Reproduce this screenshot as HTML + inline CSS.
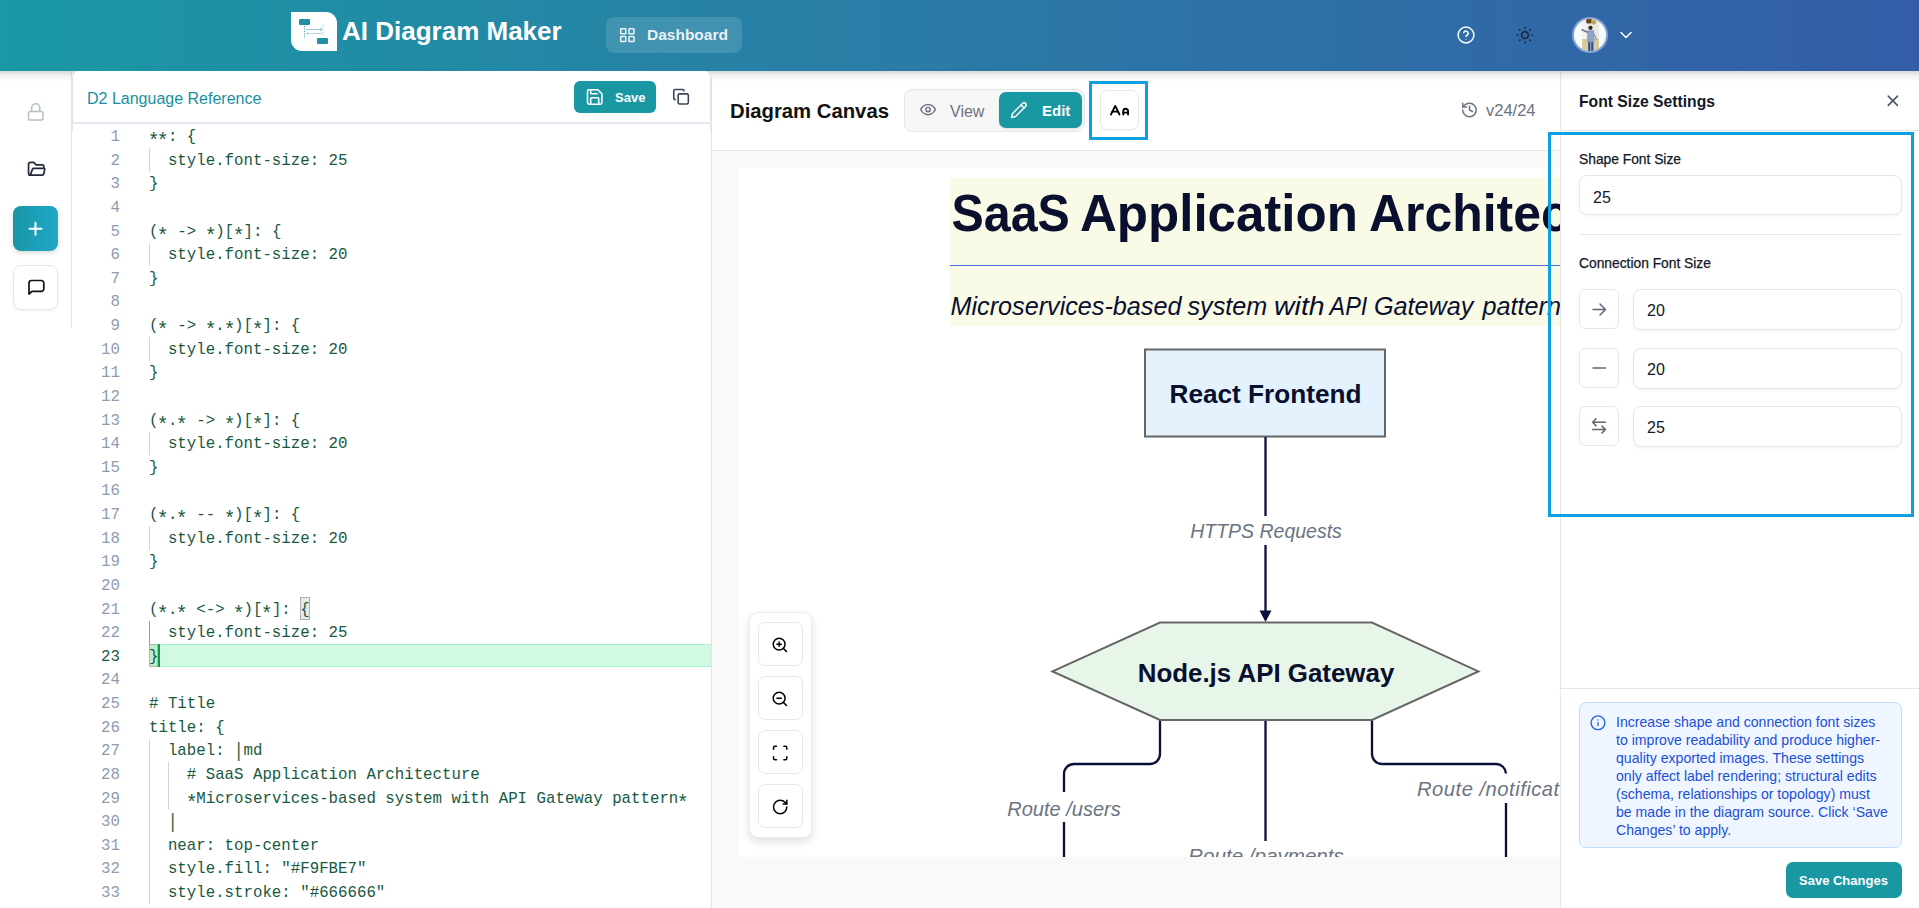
<!DOCTYPE html>
<html><head><meta charset="utf-8">
<style>
*{box-sizing:border-box;margin:0;padding:0}
html,body{width:1919px;height:908px;overflow:hidden;background:#fff;font-family:"Liberation Sans",sans-serif}
.a{position:absolute}
.t{position:absolute;white-space:nowrap;line-height:1}
#hdr{left:0;top:0;width:1919px;height:71px;background:linear-gradient(90deg,#1a98a4 0%,#2b7aa6 50%,#335da7 100%);z-index:5}

.ln{position:absolute;left:72px;width:48px;text-align:right;font-family:"Liberation Mono",monospace;font-size:15.75px;line-height:23.625px;color:#8e9bb3;white-space:pre}
.ln.act{color:#1d5c45}
.cl{position:absolute;left:149px;font-family:"Liberation Mono",monospace;font-size:15.75px;line-height:23.625px;color:#17593f;white-space:pre}
.as{display:inline-block;transform:translateY(5.5px) scale(1.25)}
.br{display:inline-block;transform:translateY(1px) scaleY(1.3)}
.ig{position:absolute;width:1px;background:#d4d4d4}
.ib{width:40px;height:40px;border-radius:6px;background:#fff;border:1px solid #e5e7eb}
.inp{width:269px;height:41px;border-radius:8px;background:#fff;border:1px solid #e5e7eb;box-shadow:0 1px 3px rgba(0,0,0,.06)}
</style></head><body>
<!-- HEADER -->
<div id="hdr" class="a">
  <svg class="a" style="left:291px;top:12px" width="46" height="39" viewBox="0 0 46 39">
    <path d="M0 0H35A11 11 0 0 1 46 11V39H11A11 11 0 0 1 0 28Z" fill="#fff"/>
    <rect x="8" y="7" width="11" height="6" rx="1" fill="#1f91a3"/>
    <rect x="26" y="26" width="11" height="6" rx="1" fill="#1f91a3"/>
    <path d="M13.5 14V26.5" stroke="#5aaab8" stroke-width="1" stroke-dasharray="1.2 1.2"/>
    <path d="M32 12.5V24.5" stroke="#9ccbd4" stroke-width="1" stroke-dasharray="1.2 1.2"/>
    <path d="M15 17.5H31M29 15.8L31 17.5L29 19.2" stroke="#7fbcc8" stroke-width=".8" fill="none"/>
    <path d="M15.5 21.5H31M17.5 19.8L15.5 21.5L17.5 23.2" stroke="#9ccbd4" stroke-width=".8" fill="none"/>
  </svg>
  <div class="t" style="left:342px;top:18px;font-size:26px;font-weight:bold;color:#fff">AI Diagram Maker</div>
  <div class="a" style="left:606px;top:17px;width:136px;height:36px;border-radius:8px;background:rgba(255,255,255,.13)"></div>
  <svg class="a" style="left:619px;top:27px" width="17" height="16" viewBox="0 0 17 16" fill="none" stroke="rgba(255,255,255,.9)" stroke-width="1.5">
    <rect x="1.75" y="1.75" width="5" height="5" rx=".5"/><rect x="10" y="1.75" width="5" height="5" rx=".5"/>
    <rect x="1.75" y="9.5" width="5" height="5" rx=".5"/><rect x="10" y="9.5" width="5" height="5" rx=".5"/>
  </svg>
  <div class="t" style="left:647px;top:27px;font-size:15.5px;font-weight:bold;color:rgba(255,255,255,.9)">Dashboard</div>
  <svg class="a" style="left:1456px;top:25px" width="20" height="20" viewBox="0 0 20 20" fill="none" stroke="#fff" stroke-width="1.5" stroke-linecap="round">
    <circle cx="10" cy="10" r="7.9"/>
    <path d="M7.7 7.6A2.4 2.4 0 0 1 12.3 8.3C12.3 9.8 10 10.3 10 11.6"/>
    <circle cx="10" cy="14.3" r=".5" fill="#fff" stroke="none"/>
  </svg>
  <svg class="a" style="left:1515px;top:25px" width="20" height="20" viewBox="0 0 20 20" fill="none" stroke="#1e293b" stroke-width="1.7" stroke-linecap="round">
    <circle cx="10" cy="10" r="3.4"/>
    <path d="M10 2.3V2.9M10 17.1V17.7M2.3 10H2.9M17.1 10H17.7M4.6 4.6L5 5M15 15L15.4 15.4M4.6 15.4L5 15M15 5L15.4 4.6"/>
  </svg>
  <svg class="a" style="left:1572px;top:17px" width="36" height="36" viewBox="0 0 36 36">
    <defs><clipPath id="av"><circle cx="18" cy="18" r="16"/></clipPath></defs>
    <circle cx="18" cy="18" r="18" fill="#86a3d2"/>
    <circle cx="18" cy="18" r="16" fill="#f6fbfd"/>
    <g clip-path="url(#av)">
      <rect x="10" y="1.5" width="17" height="33" fill="#e9e8e2"/>
      <rect x="10" y="22" width="17" height="13" fill="#d8cc9f"/>
      <rect x="10.5" y="2" width="4" height="20" fill="#f3f3f0"/>
      <ellipse cx="17" cy="4" rx="3" ry="2.6" fill="#6a4424"/>
      <ellipse cx="21.5" cy="5" rx="2.5" ry="2.5" fill="#b5ad60"/>
      <circle cx="18.5" cy="10.8" r="2.1" fill="#2a2520"/>
      <path d="M15.3 13.2H22L22.6 25H15Z" fill="#8fa3c6"/>
      <path d="M16 15.5L9.5 12.5" stroke="#707a8e" stroke-width="1.6"/>
      <path d="M22 17L24.5 23" stroke="#8a8f9a" stroke-width="1.2"/>
      <path d="M17.3 25V34M20.3 25V34" stroke="#2350a6" stroke-width="2.2"/>
    </g>
  </svg>
  <svg class="a" style="left:1619px;top:30px" width="14" height="10" viewBox="0 0 14 10" fill="none" stroke="#fff" stroke-width="1.5" stroke-linecap="round" stroke-linejoin="round">
    <path d="M2 2.5L7 7.5L12 2.5"/>
  </svg>
</div>

<!-- SIDEBAR -->
<div class="a" style="left:0;top:70px;width:72px;height:258px;border-right:1px solid #e5e7eb;background:#fff"></div>
<div class="a" style="left:0;top:71px;width:72px;height:11px;background:linear-gradient(rgba(0,0,0,.15),rgba(0,0,0,.06) 40%,rgba(0,0,0,0))"></div>
<div class="a" style="left:13px;top:206px;width:45px;height:45px;border-radius:8px;background:linear-gradient(90deg,#1996a4,#20a8c9);box-shadow:0 2px 5px rgba(0,0,0,.15)"></div>
<div class="a" style="left:13px;top:265px;width:45px;height:45px;border-radius:8px;border:1px solid #e5e7eb;background:#fff;box-shadow:0 1px 3px rgba(0,0,0,.05)"></div>

<!-- EDITOR -->
<div class="a" style="left:72px;top:71px;width:10px;height:11px;background:linear-gradient(rgba(0,0,0,.15),rgba(0,0,0,.06) 40%,rgba(0,0,0,0))"></div>
<div class="a" style="left:700px;top:71px;width:12px;height:11px;background:linear-gradient(rgba(0,0,0,.15),rgba(0,0,0,.06) 40%,rgba(0,0,0,0))"></div>
<div class="a" style="left:72px;top:71px;width:639px;height:837px;background:#fff;border-radius:7px 7px 0 0"></div>
<div class="a" style="left:72px;top:71px;width:639px;height:60px;border:1px solid #dde3ee;border-top:none;border-bottom:none;border-radius:7px 7px 0 0"></div>
<div class="a" style="left:72px;top:122px;width:639px;height:2px;background:#e2e8f0"></div>
<div class="t" style="left:87px;top:90.5px;font-size:16px;color:#1a8fa0">D2 Language Reference</div>
<div class="a" style="left:574px;top:81px;width:82px;height:32px;border-radius:6px;background:#1997a3"></div>
<div class="t" style="left:615px;top:91px;font-size:13px;font-weight:bold;color:#fff">Save</div>


<!-- CODE -->
<div class="a" style="left:149px;top:644px;width:562px;height:23px;background:#d1f9e4;border-top:1px solid #a6f2cb;border-bottom:1px solid #a6f2cb"></div>
<div class="a" style="left:149px;top:644px;width:9px;height:23px;background:#bdeccf;border:1px solid #b5b5b5"></div>
<div class="a" style="left:300px;top:597px;width:10px;height:23px;background:#e6ebe6;border:1px solid #b0b0b0"></div>
<div class="ig" style="left:149px;top:148.125px;height:23.625px"></div>
<div class="ig" style="left:149px;top:242.625px;height:23.625px"></div>
<div class="ig" style="left:149px;top:337.125px;height:23.625px"></div>
<div class="ig" style="left:149px;top:431.625px;height:23.625px"></div>
<div class="ig" style="left:149px;top:526.125px;height:23.625px"></div>
<div class="ig" style="left:149px;top:620.625px;height:23.625px;background:#999"></div>
<div class="ig" style="left:149px;top:738.75px;height:165px"></div>
<div class="ig" style="left:168px;top:762.375px;height:47.25px"></div>
<div class="ln" style="top:126.000px">1</div>
<div class="cl" style="top:126.000px"><span class="as">*</span><span class="as">*</span>: {</div>
<div class="ln" style="top:149.625px">2</div>
<div class="cl" style="top:149.625px">  style.font-size: 25</div>
<div class="ln" style="top:173.250px">3</div>
<div class="cl" style="top:173.250px">}</div>
<div class="ln" style="top:196.875px">4</div>
<div class="ln" style="top:220.500px">5</div>
<div class="cl" style="top:220.500px">(<span class="as">*</span> -&gt; <span class="as">*</span>)[<span class="as">*</span>]: {</div>
<div class="ln" style="top:244.125px">6</div>
<div class="cl" style="top:244.125px">  style.font-size: 20</div>
<div class="ln" style="top:267.750px">7</div>
<div class="cl" style="top:267.750px">}</div>
<div class="ln" style="top:291.375px">8</div>
<div class="ln" style="top:315.000px">9</div>
<div class="cl" style="top:315.000px">(<span class="as">*</span> -&gt; <span class="as">*</span>.<span class="as">*</span>)[<span class="as">*</span>]: {</div>
<div class="ln" style="top:338.625px">10</div>
<div class="cl" style="top:338.625px">  style.font-size: 20</div>
<div class="ln" style="top:362.250px">11</div>
<div class="cl" style="top:362.250px">}</div>
<div class="ln" style="top:385.875px">12</div>
<div class="ln" style="top:409.500px">13</div>
<div class="cl" style="top:409.500px">(<span class="as">*</span>.<span class="as">*</span> -&gt; <span class="as">*</span>)[<span class="as">*</span>]: {</div>
<div class="ln" style="top:433.125px">14</div>
<div class="cl" style="top:433.125px">  style.font-size: 20</div>
<div class="ln" style="top:456.750px">15</div>
<div class="cl" style="top:456.750px">}</div>
<div class="ln" style="top:480.375px">16</div>
<div class="ln" style="top:504.000px">17</div>
<div class="cl" style="top:504.000px">(<span class="as">*</span>.<span class="as">*</span> -- <span class="as">*</span>)[<span class="as">*</span>]: {</div>
<div class="ln" style="top:527.625px">18</div>
<div class="cl" style="top:527.625px">  style.font-size: 20</div>
<div class="ln" style="top:551.250px">19</div>
<div class="cl" style="top:551.250px">}</div>
<div class="ln" style="top:574.875px">20</div>
<div class="ln" style="top:598.500px">21</div>
<div class="cl" style="top:598.500px">(<span class="as">*</span>.<span class="as">*</span> &lt;-&gt; <span class="as">*</span>)[<span class="as">*</span>]: {</div>
<div class="ln" style="top:622.125px">22</div>
<div class="cl" style="top:622.125px">  style.font-size: 25</div>
<div class="ln act" style="top:645.750px">23</div>
<div class="cl" style="top:645.750px">}</div>
<div class="ln" style="top:669.375px">24</div>
<div class="ln" style="top:693.000px">25</div>
<div class="cl" style="top:693.000px"># Title</div>
<div class="ln" style="top:716.625px">26</div>
<div class="cl" style="top:716.625px">title: {</div>
<div class="ln" style="top:740.250px">27</div>
<div class="cl" style="top:740.250px">  label: <span class="br">|</span>md</div>
<div class="ln" style="top:763.875px">28</div>
<div class="cl" style="top:763.875px">    # SaaS Application Architecture</div>
<div class="ln" style="top:787.500px">29</div>
<div class="cl" style="top:787.500px">    <span class="as">*</span>Microservices-based system with API Gateway pattern<span class="as">*</span></div>
<div class="ln" style="top:811.125px">30</div>
<div class="cl" style="top:811.125px">  <span class="br">|</span></div>
<div class="ln" style="top:834.750px">31</div>
<div class="cl" style="top:834.750px">  near: top-center</div>
<div class="ln" style="top:858.375px">32</div>
<div class="cl" style="top:858.375px">  style.fill: &quot;#F9FBE7&quot;</div>
<div class="ln" style="top:882.000px">33</div>
<div class="cl" style="top:882.000px">  style.stroke: &quot;#666666&quot;</div>

<div class="a" style="left:158px;top:644px;width:2px;height:23px;background:#0a9e3c"></div>

<!-- CANVAS -->
<div class="a" style="left:712px;top:71px;width:848px;height:80px;background:#fff;border-bottom:1px solid #e5e7eb"></div>
<div class="a" style="left:712px;top:151px;width:848px;height:757px;background:#f9f9f9"></div>
<div class="a" style="left:739px;top:168px;width:821px;height:689px;background:#fff"></div>
<div class="t" style="left:730px;top:101px;font-size:20.3px;font-weight:bold;color:#111">Diagram Canvas</div>
<div class="a" style="left:904px;top:89px;width:181px;height:43px;border-radius:8px;background:#f7f7f7;border:1px solid #e6e6e6"></div>
<div class="a" style="left:999px;top:92px;width:83px;height:36px;border-radius:7px;background:#1997a3;box-shadow:0 1px 2px rgba(0,0,0,.1)"></div>
<div class="t" style="left:950px;top:103.5px;font-size:16px;color:#6b7280">View</div>
<div class="t" style="left:1042px;top:103px;font-size:15px;font-weight:bold;color:#fff">Edit</div>
<div class="a" style="left:1100px;top:90px;width:39px;height:40px;border-radius:7px;background:#fff;border:1px solid #e5e7eb;box-shadow:0 1px 2px rgba(0,0,0,.04)"></div>
<div class="a" style="left:1089px;top:81px;width:59px;height:59px;border:3px solid #0ea0e2"></div>
<div class="t" style="left:1486px;top:101.5px;font-size:16.5px;color:#6b7280">v24/24</div>

<!-- DIAGRAM -->
<svg class="a" style="left:0;top:0" width="1919" height="908" viewBox="0 0 1919 908">
 <defs><clipPath id="dc"><rect x="739" y="168" width="821" height="689"/></clipPath></defs>
 <g clip-path="url(#dc)" font-family="Liberation Sans, sans-serif">
  <rect x="950" y="177.5" width="700" height="148.5" fill="#F9FBE7"/>
  <path d="M950 265.5H1650" stroke="#4a6fe3" stroke-width="1"/>
  <g font-weight="bold" font-size="52" fill="#0a0f2e">
   <text transform="translate(951.5 231) scale(.93 1)">SaaS</text><text transform="translate(1080 231) scale(.982 1)">Application</text><text transform="translate(1369 231) scale(.96 1)">Architecture</text>
  </g>
  <g font-style="italic" font-size="25.2" fill="#0a0f2e">
   <text x="950.5" y="315">Microservices-based</text><text x="1187.5" y="315">system</text><text transform="translate(1274 315) scale(1.13 1)">with</text><text transform="translate(1329.5 315) scale(.93 1)">API</text><text x="1374" y="315">Gateway</text><text x="1482.5" y="315">pattern</text>
  </g>
  <rect x="1145" y="349.5" width="240" height="87" fill="#e3f2fd" stroke="#666" stroke-width="2"/>
  <text x="1265.5" y="402.5" text-anchor="middle" font-weight="bold" font-size="26.2" fill="#0a0f2e">React Frontend</text>
  <g stroke="#0a0f3c" stroke-width="2.3" fill="none">
   <path d="M1265.5 437V516M1265.5 545V612"/>
   <path d="M1160 720V754A10 10 0 0 1 1150 764H1074A10 10 0 0 0 1064 774V792M1064 822V860"/>
   <path d="M1265.5 720V841"/>
   <path d="M1372 720V754A10 10 0 0 0 1382 764H1496A10 10 0 0 1 1506 773.5M1506 803V860"/>
  </g>
  <path d="M1259.5 610.5H1271.5L1265.5 622Z" fill="#0a0f3c"/>
  <path d="M1052.5 671.4L1160 622.5H1372L1478.4 671.4L1372 720H1160Z" fill="#e8f5e9" stroke="#666" stroke-width="2"/>
  <text x="1266" y="682" text-anchor="middle" font-weight="bold" font-size="25.9" fill="#0a0f2e">Node.js API Gateway</text>
  <g font-style="italic" font-size="19.5" fill="#6b7384">
   <text x="1266" y="538" text-anchor="middle">HTTPS Requests</text>
   <text x="1064" y="816.4" text-anchor="middle" font-size="20">Route /users</text>
   <text x="1266" y="863" text-anchor="middle" font-size="20.6">Route /payments</text>
   <text x="1417" y="795.5" font-size="20.2" letter-spacing=".5">Route /notifications</text>
  </g>
 </g>
</svg>


<!-- ZOOM CONTROLS -->
<div class="a" style="left:749px;top:612px;width:63px;height:226px;border-radius:9px;background:#fff;border:1px solid #ececec;box-shadow:0 4px 10px rgba(0,0,0,.13)"></div>
<div class="a" style="left:758px;top:622px;width:45px;height:44px;border-radius:7px;background:#fff;border:1px solid #e8e8e8"></div>
<div class="a" style="left:758px;top:676px;width:45px;height:44px;border-radius:7px;background:#fff;border:1px solid #e8e8e8"></div>
<div class="a" style="left:758px;top:730px;width:45px;height:44px;border-radius:7px;background:#fff;border:1px solid #e8e8e8"></div>
<div class="a" style="left:758px;top:784px;width:45px;height:44px;border-radius:7px;background:#fff;border:1px solid #e8e8e8"></div>

<!-- RIGHT PANEL -->
<div class="a" style="left:1560px;top:71px;width:359px;height:837px;background:#fff;border-left:1px solid #e5e7eb"></div>
<div class="a" style="left:711px;top:71px;width:1208px;height:11px;background:linear-gradient(rgba(0,0,0,.15),rgba(0,0,0,.06) 40%,rgba(0,0,0,0))"></div>
<div class="a" style="left:711px;top:71px;width:1px;height:837px;background:#e3e5e8"></div>
<div class="a" style="left:1561px;top:130px;width:358px;height:1px;background:#e5e7eb"></div>
<div class="t" style="left:1579px;top:93.5px;font-size:15.7px;font-weight:bold;color:#111827">Font Size Settings</div>
<div class="t" style="left:1579px;top:153px;font-size:13.8px;color:#111827;-webkit-text-stroke:.25px #111827">Shape Font Size</div>
<div class="a" style="left:1579px;top:175px;width:323px;height:40px;border-radius:8px;background:#fff;border:1px solid #e5e7eb;box-shadow:0 1px 3px rgba(0,0,0,.06)"></div>
<div class="t" style="left:1593px;top:190px;font-size:16px;color:#111827">25</div>
<div class="a" style="left:1579px;top:234px;width:323px;height:1px;background:#e5e7eb"></div>
<div class="t" style="left:1579px;top:257px;font-size:13.8px;color:#111827;-webkit-text-stroke:.25px #111827">Connection Font Size</div>
<div class="a ib" style="left:1579px;top:289px"></div><div class="a inp" style="left:1633px;top:289px"></div>
<div class="a ib" style="left:1579px;top:348px"></div><div class="a inp" style="left:1633px;top:348px"></div>
<div class="a ib" style="left:1579px;top:406px"></div><div class="a inp" style="left:1633px;top:406px"></div>
<div class="t" style="left:1647px;top:303px;font-size:16px;color:#111827">20</div>
<div class="t" style="left:1647px;top:362px;font-size:16px;color:#111827">20</div>
<div class="t" style="left:1647px;top:420px;font-size:16px;color:#111827">25</div>
<div class="a" style="left:1548px;top:132px;width:366px;height:385px;border:3px solid #0ea0e2"></div>
<div class="a" style="left:1561px;top:688px;width:358px;height:1px;background:#e5e7eb"></div>
<div class="a" style="left:1579px;top:702px;width:323px;height:146px;border-radius:7px;background:#eff6ff;border:1px solid #bfdbfe"></div>
<div class="a" style="left:1616px;top:713px;font-size:14.1px;line-height:18px;color:#1d4ed8;white-space:nowrap">Increase shape and connection font sizes<br>to improve readability and produce higher-<br>quality exported images. These settings<br>only affect label rendering; structural edits<br>(schema, relationships or topology) must<br>be made in the diagram source. Click ‘Save<br>Changes’ to apply.</div>
<div class="a" style="left:1786px;top:862px;width:116px;height:36px;border-radius:7px;background:#1997a3"></div>
<div class="t" style="left:1799px;top:874px;font-size:13px;font-weight:bold;color:#fff">Save Changes</div>

<!-- ICON OVERLAY -->
<svg class="a" style="left:0;top:0;z-index:20;pointer-events:none" width="1919" height="908" viewBox="0 0 1919 908" fill="none" stroke-linecap="round" stroke-linejoin="round">
  <!-- sidebar lock -->
  <g stroke="#b6bebe" stroke-width="1.5"><rect x="28.5" y="111.5" width="14.5" height="8.5" rx="1.8"/><path d="M31.7 111.5V107.8A4 4 0 0 1 39.8 107.8V111.5"/></g>
  <!-- folder open -->
  <svg x="26" y="159" width="20.4" height="20.4" viewBox="0 0 24 24" stroke="#1f2937" stroke-width="2"><path d="M5 19l2.757-7.351a1 1 0 0 1 .936-.649h12.307a1 1 0 0 1 .986 1.164l-.996 5.211a2 2 0 0 1-1.964 1.625h-14.026a2 2 0 0 1-2-2v-11a2 2 0 0 1 2-2h4l3 3h7a2 2 0 0 1 2 2v2"/></svg>
  <!-- plus -->
  <path d="M29.5 228.8H41.5M35.5 222.8V234.8" stroke="#fff" stroke-width="2"/>
  <!-- chat -->
  <path d="M29 294V283a2.5 2.5 0 0 1 2.5-2.5h9.8a2.5 2.5 0 0 1 2.5 2.5v5.8a2.5 2.5 0 0 1-2.5 2.5h-9.3z" stroke="#111" stroke-width="1.7"/>
  <!-- save floppy -->
  <svg x="585.1" y="87.4" width="19.2" height="19.2" viewBox="0 0 24 24" stroke="#fff" stroke-width="2"><path d="M15.2 3a2 2 0 0 1 1.4.6l3.8 3.8a2 2 0 0 1 .6 1.4V19a2 2 0 0 1-2 2H5a2 2 0 0 1-2-2V5a2 2 0 0 1 2-2z"/><path d="M17 21v-7a1 1 0 0 0-1-1H8a1 1 0 0 0-1 1v7"/><path d="M7 3v4a1 1 0 0 0 1 1h7"/></svg>
  <!-- copy -->
  <svg x="672.3" y="88" width="17.5" height="17.5" viewBox="0 0 24 24" stroke="#3b4659" stroke-width="2.2"><rect width="14" height="14" x="8" y="8" rx="2" ry="2"/><path d="M4 16c-1.1 0-2-.9-2-2V4c0-1.1.9-2 2-2h10c1.1 0 2 .9 2 2"/></svg>
  <!-- eye -->
  <svg x="919.3" y="100.8" width="17.5" height="17.5" viewBox="0 0 24 24" stroke="#6b7280" stroke-width="2"><path d="M2 12s3-7 10-7 10 7 10 7-3 7-10 7-10-7-10-7Z"/><circle cx="12" cy="12" r="3"/></svg>
  <!-- pencil -->
  <svg x="1010" y="101.3" width="17.7" height="17.7" viewBox="0 0 24 24" stroke="#fff" stroke-width="2"><path d="M17 3a2.85 2.83 0 1 1 4 4L7.5 20.5 2 22l1.5-5.5Z"/><path d="m15 5 4 4"/></svg>
  <!-- Aa -->
  <svg x="1108.1" y="99.3" width="22.8" height="22.8" viewBox="0 0 24 24" stroke="#000" stroke-width="2"><path d="M21 14h-5"/><path d="M16 16v-3.5a2.5 2.5 0 0 1 5 0V16"/><path d="M4.5 13h6"/><path d="m3 16 4.5-9 4.5 9"/></svg>
  <!-- history -->
  <svg x="1460.5" y="101" width="18" height="18" viewBox="0 0 24 24" stroke="#6b7280" stroke-width="2"><path d="M3 12a9 9 0 1 0 9-9 9.75 9.75 0 0 0-6.74 2.74L3 8"/><path d="M3 3v5h5"/><path d="M12 7v5l4 2"/></svg>
  <!-- close -->
  <svg x="1883.6" y="91.5" width="18.5" height="18.5" viewBox="0 0 24 24" stroke="#4b5563" stroke-width="2"><path d="M18 6 6 18"/><path d="m6 6 12 12"/></svg>
  <!-- conn icons -->
  <g stroke="#5f6573" stroke-width="1.5">
    <path d="M1593 309.5H1605.5M1600 304L1605.5 309.5L1600 315"/>
    <path d="M1593 368H1605.5"/>
    <path d="M1592.6 422.2H1605.5M1596 418.8L1592.6 422.2L1596 425.6M1592.6 429.5H1605.5M1602 426.1L1605.5 429.5L1602 432.9"/>
  </g>
  <!-- zoom icons -->
  <svg x="771" y="636" width="17.76" height="17.76" viewBox="0 0 24 24" stroke="#000" stroke-width="2"><circle cx="11" cy="11" r="8"/><path d="m21 21-4.3-4.3"/><path d="M11 8v6"/><path d="M8 11h6"/></svg>
  <svg x="771" y="690" width="17.76" height="17.76" viewBox="0 0 24 24" stroke="#000" stroke-width="2"><circle cx="11" cy="11" r="8"/><path d="m21 21-4.3-4.3"/><path d="M8 11h6"/></svg>
  <svg x="771.3" y="744.1" width="17.76" height="17.76" viewBox="0 0 24 24" stroke="#000" stroke-width="2"><path d="M3 7V5a2 2 0 0 1 2-2h2"/><path d="M17 3h2a2 2 0 0 1 2 2v2"/><path d="M21 17v2a2 2 0 0 1-2 2h-2"/><path d="M7 21H5a2 2 0 0 1-2-2v-2"/></svg>
  <svg x="771.3" y="798.1" width="17.76" height="17.76" viewBox="0 0 24 24" stroke="#000" stroke-width="2"><path d="M21 12a9 9 0 1 1-9-9c2.52 0 4.93 1 6.74 2.74L21 8"/><path d="M21 3v5h-5"/></svg>
  <!-- info -->
  <svg x="1589.7" y="714.5" width="16.56" height="16.56" viewBox="0 0 24 24" stroke="#2563eb" stroke-width="2"><circle cx="12" cy="12" r="10"/><path d="M12 16v-4"/><path d="M12 8h.01"/></svg>
</svg>
</body></html>
